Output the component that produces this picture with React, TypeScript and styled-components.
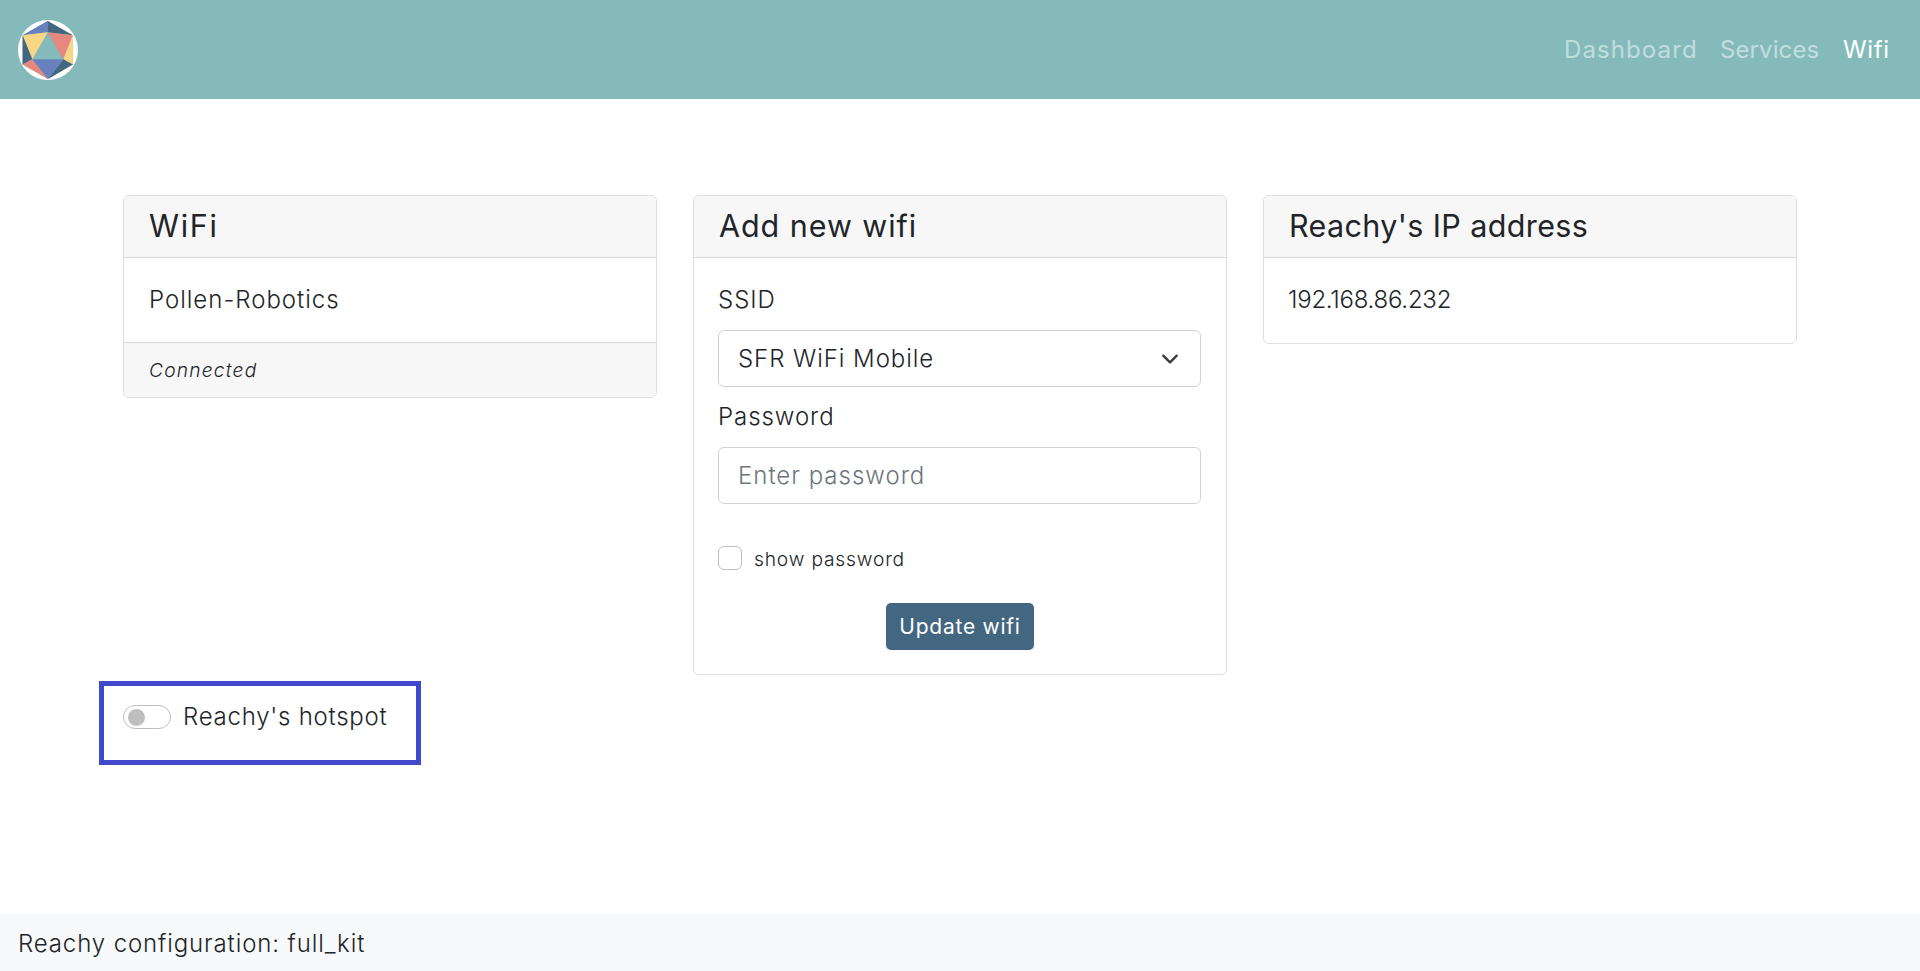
import React from 'react';
import styled, { createGlobalStyle } from 'styled-components';

const GlobalStyle = createGlobalStyle`
  *, *::before, *::after { box-sizing: border-box; }
  body {
    margin: 0;
    background: #fff;
    color: #212529;
    font-family: Inter, 'Liberation Sans', sans-serif;
    font-size: 24px;
    font-weight: 300;
    line-height: 36px;
  }
`;

const Page = styled.div`
  display: flex;
  flex-direction: column;
  height: 971px;
  overflow: hidden;
`;

const Navbar = styled.header`
  display: flex;
  align-items: center;
  justify-content: space-between;
  height: 99px;
  padding: 0 29px 0 18px;
  background: #84bbba;
`;

const Nav = styled.nav`
  display: flex;
  gap: 24px;
`;

const NavLink = styled.a<{ $active?: boolean; $width: number; $track: number }>`
  width: ${(p) => p.$width}px;
  color: ${(p) => (p.$active ? '#fff' : 'rgba(255, 255, 255, 0.5)')};
  font-weight: 400;
  letter-spacing: ${(p) => p.$track}px;
  white-space: nowrap;
`;

const Main = styled.main`
  flex: 1;
  padding: 96px 123px 0;
`;

const Cards = styled.div`
  display: grid;
  grid-template-columns: repeat(3, 1fr);
  align-items: start;
  gap: 36px;
`;

const Card = styled.section`
  display: flex;
  flex-direction: column;
  border: 1px solid #dfdfdf;
  border-radius: 6px;
  overflow: hidden;
`;

const CardHeader = styled.div`
  height: 62px;
  padding: 11px 25px;
  background: #f7f7f7;
  border-bottom: 1px solid #d8d8d8;
`;

const CardTitle = styled.h5<{ $track: number }>`
  margin: 0;
  font-size: 30.5px;
  font-weight: 400;
  line-height: 37px;
  letter-spacing: ${(p) => p.$track}px;
`;

const CardBody = styled.div<{ $last?: boolean }>`
  display: flex;
  flex-direction: column;
  padding: 24px 25px ${(p) => (p.$last ? 25 : 24)}px 24px;
`;

const CardFooter = styled.div`
  height: 55px;
  padding: 12px 25px;
  background: #f7f7f7;
  border-top: 1px solid #d8d8d8;
  font-size: 19.2px;
  font-style: italic;
  line-height: 30px;
`;

const Label = styled.label`
  margin-bottom: 12px;
`;

const Text = styled.span<{ $track: number; $indent?: boolean }>`
  padding-left: ${(p) => (p.$indent ? 1 : 0)}px;
  letter-spacing: ${(p) => p.$track}px;
  white-space: nowrap;
`;

const Select = styled.button`
  display: flex;
  align-items: center;
  justify-content: space-between;
  height: 57px;
  margin-bottom: 12px;
  padding: 0 21px 0 18px;
  border: 1px solid #ced4da;
  border-radius: 6px;
  background: #fff;
  color: inherit;
  font: inherit;
`;

const Input = styled.input`
  height: 57px;
  margin-bottom: 42px;
  padding: 0 18px 0 19px;
  border: 1px solid #ced4da;
  border-radius: 6px;
  background: #fff;
  font: inherit;
  letter-spacing: 1px;
  &::placeholder { color: #6c757d; opacity: 1; }
`;

const CheckRow = styled.label`
  display: flex;
  align-items: center;
  gap: 12px;
  height: 24px;
  margin-bottom: 33px;
  font-size: 19.2px;
  line-height: 26px;
`;

const CheckText = styled.span`
  padding-top: 2px;
  letter-spacing: 0.83px;
`;

const Checkbox = styled.input`
  appearance: none;
  width: 24px;
  height: 24px;
  margin: 0;
  border: 1px solid #bfbfbf;
  border-radius: 6px;
  background: #fff;
`;

const Submit = styled.button`
  align-self: center;
  width: 148px;
  height: 47px;
  padding: 0;
  border: 0;
  border-radius: 5px;
  background: #436681;
  color: #fff;
  font: inherit;
  font-size: 21px;
  font-weight: 400;
`;

const Hotspot = styled.div`
  display: flex;
  align-items: flex-start;
  gap: 12px;
  width: 322px;
  height: 84px;
  margin: 6px 0 0 -24px;
  padding: 13px 19px;
  border: 5px solid #4048cc;
`;

const Switch = styled.span`
  display: flex;
  align-items: center;
  width: 48px;
  height: 24px;
  margin-top: 6px;
  padding: 1px 0 0 4px;
  border: 1px solid #bfbfbf;
  border-radius: 12px;
  &::before {
    content: '';
    width: 17px;
    height: 17px;
    border-radius: 50%;
    background: #bfbfbf;
  }
`;

const Footer = styled.footer`
  height: 57px;
  padding: 12px 18px;
  background: #f8f9fa;
`;

const Logo = () => (
  <svg width="60" height="60" viewBox="18 20 60 60">
    <circle cx="48" cy="50" r="30" fill="#fff" />
    <path d="M47.7 21 72.8 35.3V64.5L48 79 22.6 64.5V35.3Z" fill="#84bbba" />
    <path d="M47.7 21V32.2L22.6 35.3Z" fill="#6880c0" />
    <path d="M47.7 21V32.2L72.8 35.3Z" fill="#436681" />
    <path d="M22.6 35.3 47.7 32.2 32.3 59.2Z" fill="#f9d684" />
    <path d="M72.8 35.3 47.7 32.2 63.3 59.2Z" fill="#e7887e" />
    <path d="M22.6 35.3 32.3 59.2 22.6 64.5Z" fill="#436681" />
    <path d="M72.8 35.3 63.3 59.2 72.8 64.5Z" fill="#f9d684" />
    <path d="M22.6 64.5 32.3 59.2 48 79Z" fill="#e7887e" />
    <path d="M72.8 64.5 63.3 59.2 48 79Z" fill="#436681" />
    <path d="M32.3 59.2H63.3L48 79Z" fill="#6880c0" />
  </svg>
);

const Chevron = () => (
  <svg width="18" height="18" viewBox="0 0 16 16" fill="none" stroke="#343a40" strokeWidth="2" strokeLinecap="round" strokeLinejoin="round">
    <path d="m2 5 6 6 6-6" />
  </svg>
);

export default function App() {
  return (
    <>
      <GlobalStyle />
      <Page>
        <Navbar>
          <Logo />
          <Nav>
            <NavLink $width={132} $track={1.1}>Dashboard</NavLink>
            <NavLink $width={99} $track={0.1}>Services</NavLink>
            <NavLink $width={48} $track={0.6} $active>Wifi</NavLink>
          </Nav>
        </Navbar>
        <Main>
          <Cards>
            <Card>
              <CardHeader><CardTitle $track={1.7}>WiFi</CardTitle></CardHeader>
              <CardBody><Text $track={1} $indent>Pollen-Robotics</Text></CardBody>
              <CardFooter><Text $track={1.2}>Connected</Text></CardFooter>
            </Card>
            <Card>
              <CardHeader><CardTitle $track={0.95}>Add new wifi</CardTitle></CardHeader>
              <CardBody>
                <Label><Text $track={1}>SSID</Text></Label>
                <Select type="button">
                  <Text $track={0.95} $indent>SFR WiFi Mobile</Text>
                  <Chevron />
                </Select>
                <Label htmlFor="password"><Text $track={0.95}>Password</Text></Label>
                <Input id="password" type="password" placeholder="Enter password" />
                <CheckRow>
                  <Checkbox type="checkbox" />
                  <CheckText>show password</CheckText>
                </CheckRow>
                <Submit type="button"><Text $track={0.75} $indent>Update wifi</Text></Submit>
              </CardBody>
            </Card>
            <Card>
              <CardHeader><CardTitle $track={0.38}>Reachy's IP address</CardTitle></CardHeader>
              <CardBody $last><Text $track={-0.25}>192.168.86.232</Text></CardBody>
            </Card>
          </Cards>
          <Hotspot>
            <Switch role="switch" aria-checked={false} />
            <Text $track={0.75}>Reachy's hotspot</Text>
          </Hotspot>
        </Main>
        <Footer><Text $track={0.88}>Reachy configuration: full_kit</Text></Footer>
      </Page>
    </>
  );
}
